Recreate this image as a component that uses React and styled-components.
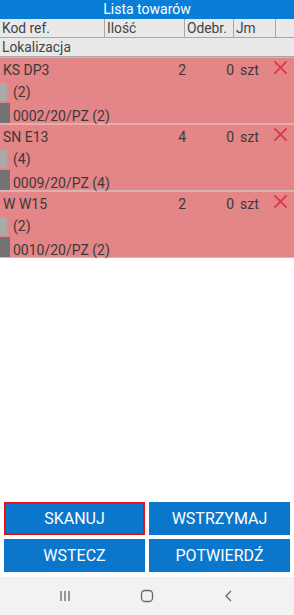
import React from "react";
import styled, { createGlobalStyle } from "styled-components";

const GlobalStyle = createGlobalStyle`
  html, body {
    margin: 0;
    padding: 0;
    background: #fff;
  }
  * {
    box-sizing: border-box;
  }
`;

const Screen = styled.div`
  width: 294px;
  height: 615px;
  display: flex;
  flex-direction: column;
  font-family: Roboto, "Liberation Sans", sans-serif;
  color: #3a3a3a;
  background: #fff;
  overflow: hidden;
`;

const TitleBar = styled.div`
  height: 19px;
  background: #0a7ed6;
  color: #fff;
  font-size: 14px;
  line-height: 19px;
  text-align: center;
`;

const HeaderRow = styled.div`
  display: grid;
  grid-template-columns: 105px 80px 49px 42px 1fr;
  height: 19px;
  background: #e9e9e9;
  border-bottom: 1px solid #a8a8a8;
`;

const HeaderCell = styled.div`
  font-size: 13.8px;
  line-height: 18px;
  padding-left: 2px;
  color: #444;
  white-space: nowrap;
  border-right: ${(p) => (p.$last ? "none" : "1px solid #a8a8a8")};
`;

const SubHeader = styled.div`
  height: 19px;
  background: #e9e9e9;
  border-bottom: 1px solid #a8a8a8;
  font-size: 13.8px;
  line-height: 18px;
  padding-left: 2px;
  color: #444;
`;

const List = styled.div`
  display: flex;
  flex-direction: column;
`;

const Item = styled.div`
  background: #e48587;
  border-bottom: 1px solid #d9b4b5;
  border-top: 1px solid #e9aaab;
  height: 67px;
  display: flex;
  flex-direction: column;
`;

const MainLine = styled.div`
  display: flex;
  align-items: center;
  height: 23px;
  font-size: 14px;
  padding-left: 3px;
`;

const Code = styled.span`
  width: 172px;
`;

const Qty = styled.span`
  width: 11px;
  text-align: right;
`;

const Taken = styled.span`
  width: 48px;
  text-align: right;
`;

const Unit = styled.span`
  margin-left: 6px;
  width: 33px;
`;

const RemoveIcon = styled.svg`
  width: 15px;
  height: 15px;
  margin-top: -4px;
`;

const SubLine = styled.div`
  display: flex;
  align-items: center;
  height: 21px;
  font-size: 14px;
`;

const SubText = styled.span`
  transform: translateY(${(p) => p.$shift}px);
`;

const Marker = styled.div`
  width: ${(p) => p.$w}px;
  height: ${(p) => p.$h}px;
  background: ${(p) => p.$c};
  margin-right: ${(p) => 13 - p.$w}px;
`;

const Spacer = styled.div`
  flex: 1;
`;

const ButtonGrid = styled.div`
  display: grid;
  grid-template-columns: 1fr 1fr;
  gap: 4px 4px;
  padding: 0 4px 5px 4px;
`;

const ActionButton = styled.button`
  height: 33px;
  border: ${(p) => (p.$focused ? "2px solid #ee1111" : "none")};
  background: #0a76cc;
  color: #fff;
  font-family: Roboto, "Liberation Sans", sans-serif;
  font-size: 16px;
  padding: 0;
  cursor: pointer;
`;

const NavBar = styled.div`
  height: 38px;
  background: #f2f2f2;
  display: flex;
  align-items: center;
  justify-content: center;
  gap: 68px;
`;

const NavIcon = styled.svg`
  width: 14px;
  height: 14px;
`;

const items = [
  { code: "KS DP3", qty: 2, loc: "(2)", doc: "0002/20/PZ (2)" },
  { code: "SN E13", qty: 4, loc: "(4)", doc: "0009/20/PZ (4)" },
  { code: "W W15", qty: 2, loc: "(2)", doc: "0010/20/PZ (2)" },
];

const App = () => {
  return (
    <Screen>
      <GlobalStyle />
      <TitleBar>Lista towarów</TitleBar>
      <HeaderRow>
        <HeaderCell>Kod ref.</HeaderCell>
        <HeaderCell>Ilość</HeaderCell>
        <HeaderCell>Odebr.</HeaderCell>
        <HeaderCell>Jm</HeaderCell>
        <HeaderCell $last />
      </HeaderRow>
      <SubHeader>Lokalizacja</SubHeader>
      <List>
        {items.map((it) => (
          <Item key={it.code}>
            <MainLine>
              <Code>{it.code}</Code>
              <Qty>{it.qty}</Qty>
              <Taken>0</Taken>
              <Unit>szt</Unit>
              <RemoveIcon viewBox="0 0 16 16">
                <path
                  d="M1.5 1.5 L14.5 14.5 M14.5 1.5 L1.5 14.5"
                  stroke="#d8344c"
                  strokeWidth="1.8"
                  fill="none"
                />
              </RemoveIcon>
            </MainLine>
            <SubLine>
              <Marker $w={7} $h={18} $c="#a9a9a9" />
              <SubText $shift={0}>{it.loc}</SubText>
            </SubLine>
            <SubLine>
              <Marker $w={10} $h={20} $c="#737373" />
              <SubText $shift={3}>{it.doc}</SubText>
            </SubLine>
          </Item>
        ))}
      </List>
      <Spacer />
      <ButtonGrid>
        <ActionButton $focused>SKANUJ</ActionButton>
        <ActionButton>WSTRZYMAJ</ActionButton>
        <ActionButton>WSTECZ</ActionButton>
        <ActionButton>POTWIERDŹ</ActionButton>
      </ButtonGrid>
      <NavBar>
        <NavIcon viewBox="0 0 14 14">
          <path d="M3 2 V12 M7 2 V12 M11 2 V12" stroke="#666" strokeWidth="1.3" />
        </NavIcon>
        <NavIcon viewBox="0 0 14 14">
          <rect x="1.5" y="1.5" width="11" height="11" rx="3.5" stroke="#666" strokeWidth="1.3" fill="none" />
        </NavIcon>
        <NavIcon viewBox="0 0 14 14">
          <path d="M9 2 L4 7 L9 12" stroke="#666" strokeWidth="1.3" fill="none" />
        </NavIcon>
      </NavBar>
    </Screen>
  );
};

export default App;
